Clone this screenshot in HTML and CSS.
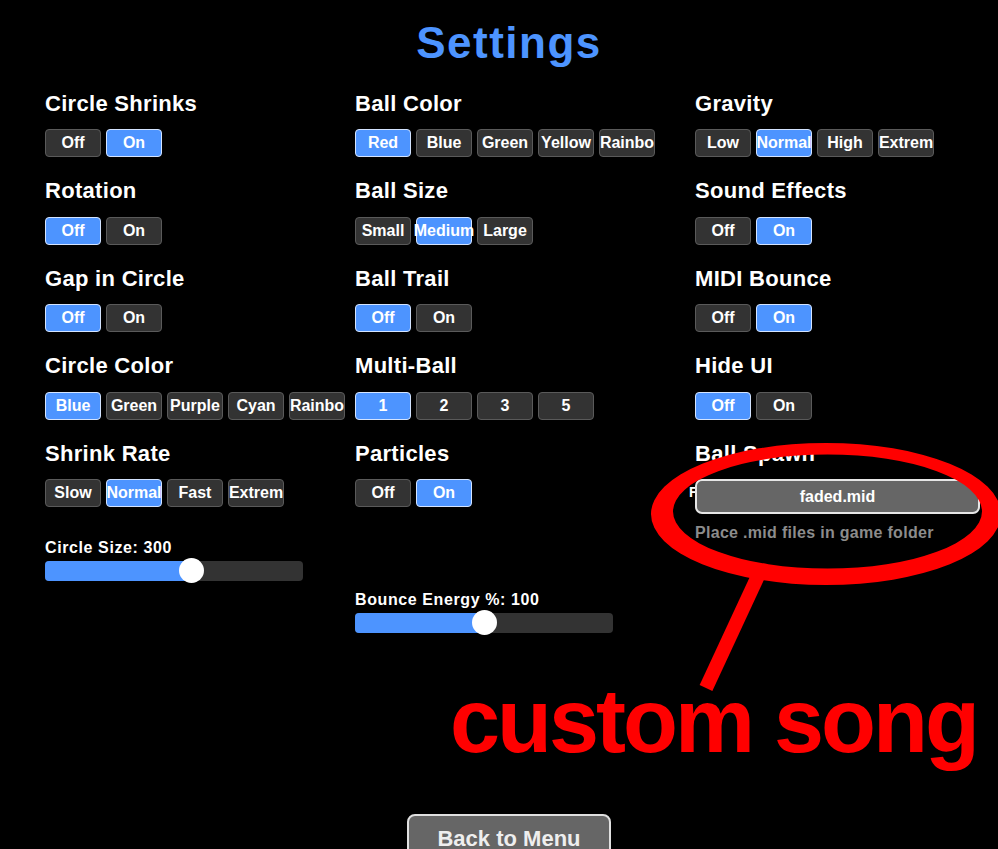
FILE: index.html
```html
<!DOCTYPE html>
<html lang="en">
<head>
<meta charset="utf-8">
<title>Settings</title>
<link rel="stylesheet" href="styles.css">
</head>
<body>
<div class="screen">
  <h1 class="title">Settings</h1>
  <div class="grid">
    <div class="col">
      <section class="setting">
        <div class="label">Circle Shrinks</div>
        <div class="opts"><span class="opt">Off</span><span class="opt sel">On</span></div>
      </section>
      <section class="setting">
        <div class="label">Rotation</div>
        <div class="opts"><span class="opt sel">Off</span><span class="opt">On</span></div>
      </section>
      <section class="setting">
        <div class="label">Gap in Circle</div>
        <div class="opts"><span class="opt sel">Off</span><span class="opt">On</span></div>
      </section>
      <section class="setting">
        <div class="label">Circle Color</div>
        <div class="opts"><span class="opt sel">Blue</span><span class="opt">Green</span><span class="opt">Purple</span><span class="opt">Cyan</span><span class="opt">Rainbo</span></div>
      </section>
      <section class="setting">
        <div class="label">Shrink Rate</div>
        <div class="opts"><span class="opt">Slow</span><span class="opt sel">Normal</span><span class="opt">Fast</span><span class="opt">Extrem</span></div>
      </section>
      <div class="slider-block sb-1">
        <div class="slabel">Circle Size: 300</div>
        <div class="track"><div class="fill" style="width:56.6%"></div><div class="knob" style="left:56.6%"></div></div>
      </div>
    </div>

    <div class="col">
      <section class="setting">
        <div class="label">Ball Color</div>
        <div class="opts"><span class="opt sel">Red</span><span class="opt">Blue</span><span class="opt">Green</span><span class="opt">Yellow</span><span class="opt">Rainbo</span></div>
      </section>
      <section class="setting">
        <div class="label">Ball Size</div>
        <div class="opts"><span class="opt">Small</span><span class="opt sel">Medium</span><span class="opt">Large</span></div>
      </section>
      <section class="setting">
        <div class="label">Ball Trail</div>
        <div class="opts"><span class="opt sel">Off</span><span class="opt">On</span></div>
      </section>
      <section class="setting">
        <div class="label">Multi-Ball</div>
        <div class="opts"><span class="opt sel">1</span><span class="opt">2</span><span class="opt">3</span><span class="opt">5</span></div>
      </section>
      <section class="setting">
        <div class="label">Particles</div>
        <div class="opts"><span class="opt">Off</span><span class="opt sel">On</span></div>
      </section>
      <div class="slider-block sb-2">
        <div class="slabel">Bounce Energy %: 100</div>
        <div class="track"><div class="fill" style="width:50%"></div><div class="knob" style="left:50%"></div></div>
      </div>
    </div>

    <div class="col">
      <section class="setting">
        <div class="label">Gravity</div>
        <div class="opts"><span class="opt">Low</span><span class="opt sel">Normal</span><span class="opt">High</span><span class="opt">Extrem</span></div>
      </section>
      <section class="setting">
        <div class="label">Sound Effects</div>
        <div class="opts"><span class="opt">Off</span><span class="opt sel">On</span></div>
      </section>
      <section class="setting">
        <div class="label">MIDI Bounce</div>
        <div class="opts"><span class="opt">Off</span><span class="opt sel">On</span></div>
      </section>
      <section class="setting">
        <div class="label">Hide UI</div>
        <div class="opts"><span class="opt sel">Off</span><span class="opt">On</span></div>
      </section>
      <section class="setting">
        <div class="label">Ball Spawn</div>
        <div class="file">
          <span class="file-under">Fixed</span>
          <div class="file-btn">faded.mid</div>
        </div>
        <div class="hint">Place .mid files in game folder</div>
      </section>
    </div>
  </div>

  <div class="back">Back to Menu</div>

  <svg class="annot" width="1018" height="849" viewBox="0 0 1018 849" xmlns="http://www.w3.org/2000/svg">
    <path fill="#ff0000" fill-rule="evenodd" d="M651 514a175 71 0 1 0 350 0a175 71 0 1 0 -350 0Z M673 511.5a154.5 57 0 1 0 309 0a154.5 57 0 1 0 -309 0Z"/>
    <line x1="758" y1="576" x2="706" y2="688" stroke="#ff0000" stroke-width="14"/>
  </svg>
  <div class="song">custom song</div>
</div>
</body>
</html>
```

FILE: styles.css
```css
* { box-sizing: border-box; }

html, body {
  margin: 0;
  padding: 0;
  background: #000;
}

body {
  overflow: hidden;
  font-family: "Liberation Sans", Arial, sans-serif;
  color: #fff;
}

.screen {
  position: relative;
  width: 1018px;
  height: 849px;
}

.title {
  margin: 0;
  padding-top: 18px;
  height: 68px;
  font-size: 44px;
  line-height: 50px;
  font-weight: bold;
  letter-spacing: 1.5px;
  text-align: center;
  color: #4d94ff;
}

.grid {
  display: grid;
  grid-template-columns: 310px 340px 1fr;
  align-items: start;
  padding-left: 45px;
  margin-top: 23.5px;
}

.col {
  display: flex;
  flex-direction: column;
}

.setting + .setting { margin-top: 22px; }

.label {
  font-size: 22px;
  line-height: 24px;
  font-weight: bold;
  letter-spacing: 0.3px;
  white-space: nowrap;
}

.opts {
  display: flex;
  gap: 5px;
  margin-top: 13.5px;
}

.opt {
  width: 56px;
  height: 28px;
  display: flex;
  align-items: center;
  justify-content: center;
  background: #333;
  border: 1px solid #5a5a5a;
  border-radius: 4px;
  font-size: 16px;
  font-weight: bold;
  white-space: nowrap;
  color: #fff;
}

.opt.sel {
  background: #4d94ff;
  border-color: #d4e4ff;
}

.slider-block.sb-1 { margin-top: 32.2px; }
.slider-block.sb-2 { margin-top: 83.9px; }

.slabel {
  font-size: 16px;
  line-height: 18px;
  font-weight: bold;
  letter-spacing: 0.6px;
  white-space: nowrap;
  margin-bottom: 3.8px;
}

.track {
  position: relative;
  width: 258px;
  height: 20px;
  background: #333;
  border-radius: 4px;
}

.fill {
  height: 100%;
  background: #4d94ff;
  border-radius: 4px 0 0 4px;
}

.knob {
  position: absolute;
  top: -2.5px;
  width: 25px;
  height: 25px;
  margin-left: -12.5px;
  background: #fff;
  border-radius: 50%;
}

.file {
  position: relative;
  width: 285px;
  margin-top: 13.8px;
}

.file-under {
  position: absolute;
  left: -6px;
  top: 4.8px;
  font-size: 14px;
  line-height: 16px;
  font-weight: bold;
  white-space: nowrap;
}

.file-btn {
  position: relative;
  z-index: 1;
  height: 35px;
  display: flex;
  align-items: center;
  justify-content: center;
  background: #666;
  border: 2px solid #e6e6e6;
  border-radius: 7px;
  font-size: 16px;
  font-weight: bold;
}

.hint {
  margin-top: 9.6px;
  font-size: 16px;
  line-height: 18px;
  font-weight: bold;
  letter-spacing: 0.3px;
  color: #8c8c8c;
  white-space: nowrap;
}

.back {
  width: 204px;
  height: 50px;
  margin: 181.3px 0 0 407px;
  padding-top: 10px;
  background: #666;
  border: 2px solid #e0e0e0;
  border-radius: 8px;
  font-size: 22px;
  line-height: 26px;
  font-weight: bold;
  color: #eee;
  text-align: center;
}

.annot {
  position: absolute;
  left: 0;
  top: 0;
  z-index: 2;
}

.song {
  position: absolute;
  left: 450px;
  top: 676px;
  z-index: 3;
  font-size: 90px;
  line-height: 90px;
  font-weight: bold;
  letter-spacing: -3px;
  color: #ff0000;
  white-space: nowrap;
}
```
